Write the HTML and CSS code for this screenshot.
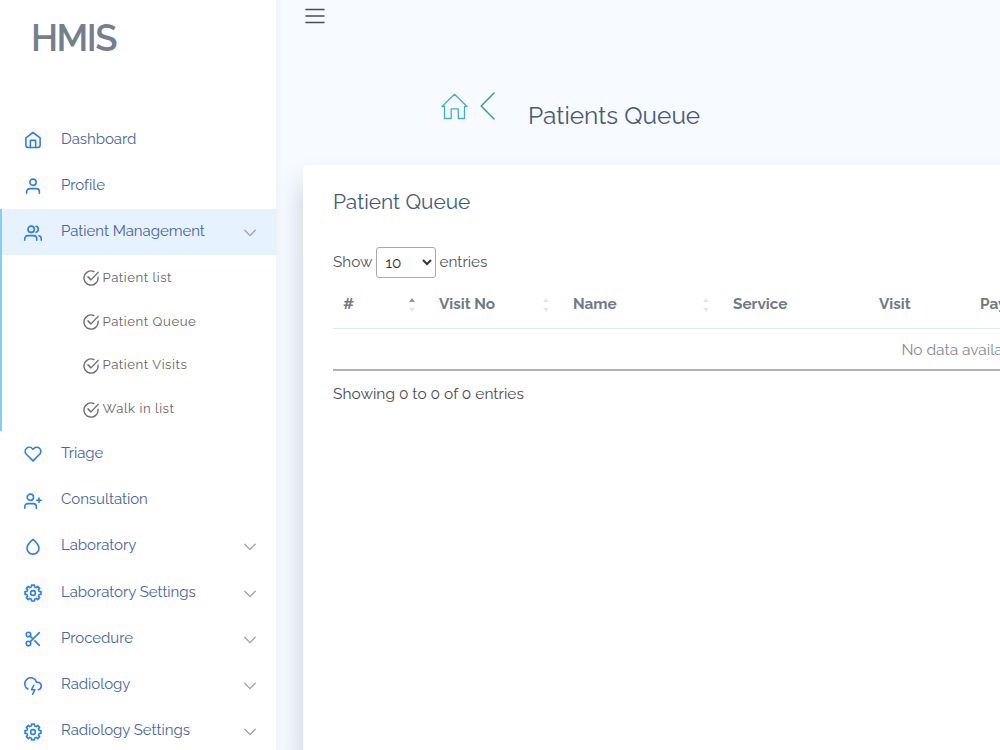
FILE: index.html
```html
<!DOCTYPE html>
<html lang="en">
<head>
  <meta charset="UTF-8" />
  <meta name="viewport" content="width=device-width, initial-scale=1.0"/>
  <title>HMIS - Patients Queue</title>
  <link rel="stylesheet" href="styles.css">
</head>
<body>

  <!-- Shared icons -->
  <svg class="sprite" xmlns="http://www.w3.org/2000/svg">
    <symbol id="chevron" viewBox="0 0 12 8"><path d="M.8 1.2 6 6.6l5.2-5.4"/></symbol>
    <symbol id="check" viewBox="0 0 24 24"><path d="M21.5 11v1a9.5 9.5 0 1 1-5.7-8.7"/><path d="M21.5 4.5 12 14.5l-4-4"/></symbol>
    <symbol id="gear" viewBox="0 0 24 24">
      <path d="M22.64 10.12v3.76l-2.49.15-.95 2.3 1.65 1.86-2.66 2.66-1.86-1.65-2.3.95-.15 2.49h-3.76l-.15-2.49-2.3-.95-1.86 1.65-2.66-2.66 1.65-1.86-.95-2.3-2.49-.15v-3.76l2.49-.15.95-2.3-1.65-1.86 2.66-2.66 1.86 1.65 2.3-.95.15-2.49h3.76l.15 2.49 2.3.95 1.86-1.65 2.66 2.66-1.65 1.86.95 2.3z"/>
      <circle cx="12" cy="12" r="3.2"/>
    </symbol>
  </svg>

  <div class="sidebar">
    <div class="brand">HMIS</div>

    <ul class="menu">
      <li><a href="#">
        <svg class="icon" viewBox="0 0 24 24"><path d="M2.5 9.2 12 2l9.5 7.2V19a3 3 0 0 1-3 3h-13a3 3 0 0 1-3-3z"/><path d="M8.5 22V12.5h7V22"/></svg>
        <span>Dashboard</span>
      </a></li>
      <li><a href="#">
        <svg class="icon" viewBox="0 0 24 24"><circle cx="12" cy="7" r="4.2"/><path d="M3.5 21.5v-2a4 4 0 0 1 4-4h9a4 4 0 0 1 4 4v2"/></svg>
        <span>Profile</span>
      </a></li>
      <li class="active">
        <a href="#">
          <svg class="icon" viewBox="0 0 24 24"><circle cx="9.5" cy="7" r="4.2"/><path d="M1 21.5v-2a4 4 0 0 1 4-4h8a4 4 0 0 1 4 4v2M23 21.5v-2a4 4 0 0 0-3-3.87M16 3.13a4 4 0 0 1 0 7.75"/></svg>
          <span>Patient Management</span>
          <svg class="arrow"><use href="#chevron"/></svg>
        </a>
        <ul class="submenu">
          <li><a href="#"><svg><use href="#check"/></svg>Patient list</a></li>
          <li><a href="#"><svg><use href="#check"/></svg>Patient Queue</a></li>
          <li><a href="#"><svg><use href="#check"/></svg>Patient Visits</a></li>
          <li><a href="#"><svg><use href="#check"/></svg>Walk in list</a></li>
        </ul>
      </li>
      <li><a href="#">
        <svg class="icon" viewBox="0 0 24 24"><path d="M20.84 4.61a5.5 5.5 0 0 0-7.78 0L12 5.67l-1.06-1.06a5.5 5.5 0 0 0-7.78 7.78L12 21.23l8.84-8.84a5.5 5.5 0 0 0 0-7.78z"/></svg>
        <span>Triage</span>
      </a></li>
      <li><a href="#">
        <svg class="icon" viewBox="0 0 24 24"><circle cx="8.5" cy="7" r="4.2"/><path d="M1 21.5v-2a4 4 0 0 1 4-4h7.5a4 4 0 0 1 4 4v2M20 8v6M23 11h-6"/></svg>
        <span>Consultation</span>
      </a></li>
      <li><a href="#">
        <svg class="icon" viewBox="0 0 24 24"><path d="M12 1.8c3.5 3 8 7 8 11.7a8 8 0 0 1-16 0C4 8.8 8.5 4.8 12 1.8z"/></svg>
        <span>Laboratory</span>
        <svg class="arrow"><use href="#chevron"/></svg>
      </a></li>
      <li><a href="#">
        <svg class="icon"><use href="#gear"/></svg>
        <span>Laboratory Settings</span>
        <svg class="arrow"><use href="#chevron"/></svg>
      </a></li>
      <li><a href="#">
        <svg class="icon" viewBox="0 0 24 24"><circle cx="6" cy="6" r="3"/><circle cx="6" cy="18" r="3"/><path d="M20.5 3.5 8.12 15.88M14.47 14.48l6.03 6.02M8.12 8.12 12 12"/></svg>
        <span>Procedure</span>
        <svg class="arrow"><use href="#chevron"/></svg>
      </a></li>
      <li><a href="#">
        <svg class="icon" viewBox="0 0 24 24"><path d="M19 16.9A5 5 0 0 0 18 7h-1.26a8 8 0 1 0-11.62 9"/><path d="m13 11-3 6h4.5l-3 6"/></svg>
        <span>Radiology</span>
        <svg class="arrow"><use href="#chevron"/></svg>
      </a></li>
      <li><a href="#">
        <svg class="icon"><use href="#gear"/></svg>
        <span>Radiology Settings</span>
        <svg class="arrow"><use href="#chevron"/></svg>
      </a></li>
    </ul>
  </div>

  <div class="main">
    <div class="topbar">
      <svg class="burger" viewBox="0 0 20 16"><path d="M1 1.5h18M1 8h18M1 14.5h18"/></svg>
    </div>

    <div class="page-title">
      <svg class="home" viewBox="0 0 27 27"><path d="M3.5 13.5H1L13.5 1.2 26 13.5h-2.5v12h-6.2v-9.7h-7.1v9.7H3.5z"/></svg>
      <svg class="back" viewBox="0 0 15 28"><path d="M14 1 1.2 14 14 27"/></svg>
      <h1>Patients Queue</h1>
    </div>

    <div class="card">
      <h2>Patient Queue</h2>
      <div class="length">
        <span>Show</span>
        <select><option>10</option><option>25</option><option>50</option></select>
        <span>entries</span>
      </div>

      <table>
        <colgroup>
          <col class="col-num"><col class="col-visit-no"><col class="col-name"><col class="col-service"><col class="col-visit"><col>
        </colgroup>
        <thead>
          <tr>
            <th class="sort asc">#</th>
            <th class="sort">Visit No</th>
            <th class="sort">Name</th>
            <th>Service</th>
            <th>Visit</th>
            <th>Payment</th>
          </tr>
        </thead>
        <tbody>
          <tr><td colspan="6">No data available in table</td></tr>
        </tbody>
      </table>

      <div class="info">Showing 0 to 0 of 0 entries</div>
    </div>
  </div>

</body>
</html>
```
FILE: styles.css
```css
:root {
  --blue: #2b7cf0;
  --link: #4565a5;
  --heading: #465b75;
  --muted: #707a85;
}

* {
  box-sizing: border-box;
}

body {
  margin: 0;
  height: 100vh;
  display: flex;
  overflow: hidden;
  background: #f7faff;
  font-family: Raleway, Lato, sans-serif;
  font-size: 15.5px;
}

ul {
  list-style: none;
  margin: 0;
  padding: 0;
}

a {
  color: inherit;
  text-decoration: none;
}

svg {
  fill: none;
  stroke-linecap: round;
  stroke-linejoin: round;
  flex-shrink: 0;
}

.sprite {
  display: none;
}

/* Sidebar */
.sidebar {
  width: 277px;
  flex-shrink: 0;
  background: #fff;
  border-right: 1px solid #f3f4f7;
  box-shadow: 2px 0 6px rgba(0, 0, 0, 0.03);
}

.brand {
  height: 116.5px;
  padding: 16px 0 0 31px;
  font-size: 36.5px;
  line-height: 46px;
  font-weight: 600;
  letter-spacing: -1.5px;
  color: #737f8d;
}

.menu > li > a {
  display: flex;
  align-items: center;
  height: 46.25px;
  padding: 0 20px 0 24px;
  font-size: 15px;
  letter-spacing: -0.04px;
  color: var(--link);
}

.menu span {
  margin: -2px 0 0 19px;
}

.icon {
  width: 18px;
  height: 18px;
  margin-top: 1px;
  stroke: var(--blue);
  stroke-width: 2.1;
}

.arrow {
  width: 12px;
  height: 8px;
  margin: 2px 0 0 auto;
  stroke: #a0a0a0;
  stroke-width: 1.3;
}

.menu > li.active {
  border-left: 2px solid #85cdf5;
}

.menu > li.active > a {
  background: #e7f2ff;
  padding-left: 22px;
}

.submenu a {
  display: flex;
  align-items: center;
  height: 43.9px;
  padding-left: 80px;
  font-size: 13.2px;
  letter-spacing: 0.55px;
  color: #666;
}

.submenu svg {
  width: 18px;
  height: 18px;
  margin: 2px 2.5px 0 0;
  stroke: #6d6d6d;
  stroke-width: 1.9;
}

/* Content */
.main {
  flex: 1;
  min-width: 0;
  display: flex;
  flex-direction: column;
}

.topbar {
  height: 80px;
  padding: 8px 28px;
}

.burger {
  width: 20px;
  height: 16px;
  stroke: #4d4d4d;
  stroke-width: 1.5;
}

.page-title {
  height: 85px;
  padding: 13px 0 0 164px;
  display: flex;
  align-items: flex-start;
}

.home {
  width: 27px;
  height: 27px;
  stroke: #3fafc8;
  stroke-width: 1.3;
}

.back {
  width: 15px;
  height: 28px;
  margin: -1px 33px 0 12px;
  stroke: #3599b5;
  stroke-width: 1.5;
}

h1 {
  margin: 8px 0 0;
  font-size: 24.4px;
  line-height: 30px;
  font-weight: 400;
  color: var(--heading);
}

.card {
  flex: 1;
  width: 1420px;
  margin-left: 26px;
  padding: 24px 30px 0;
  background: #fff;
  border-radius: 4px 4px 0 0;
  box-shadow: 0 20px 28px rgba(60, 80, 130, 0.27);
}

h2 {
  margin: 0;
  font-size: 20.9px;
  line-height: 26px;
  font-weight: 400;
  color: var(--heading);
}

.length {
  display: flex;
  align-items: center;
  gap: 4px;
  height: 31px;
  margin-top: 32px;
  font-size: 15.3px;
  color: #555;
}

.length span {
  margin-top: -1px;
}

select {
  width: 60px;
  height: 31px;
  margin-right: -1px;
  padding: 4px;
  border: 1px solid #aaa;
  border-radius: 3px;
  background: #fff;
  color: #333;
  font: inherit;
}

table {
  width: 1318px;
  margin-top: 3px;
  table-layout: fixed;
  border-collapse: separate;
  border-spacing: 0;
  border-bottom: 2px solid #b2b2b2;
}

th {
  height: 48px;
  padding: 0 10px 1px;
  text-align: left;
  font-size: 15.3px;
  font-weight: 700;
  color: var(--muted);
  border-bottom: 1px solid #e3eaec;
}

td {
  height: 40px;
  padding: 0;
  text-align: center;
  color: #858b91;
}

.col-num { width: 96px; }
.col-visit-no { width: 134px; }
.col-name { width: 160px; }
.col-service { width: 146px; }
.col-visit { width: 101px; }

/* Sorting arrows */
.sort {
  position: relative;
}

.sort::before,
.sort::after {
  content: "";
  position: absolute;
  right: 14px;
  border: 3px solid transparent;
}

.sort::before {
  top: 14px;
  border-bottom: 4px solid #e6e6e6;
}

.sort::after {
  top: 27px;
  border-top: 4px solid #e6e6e6;
}

.sort.asc::before {
  border-bottom-color: #929ba3;
}

.info {
  margin-top: 13px;
  line-height: 20px;
  color: #4c4c4c;
}
```
